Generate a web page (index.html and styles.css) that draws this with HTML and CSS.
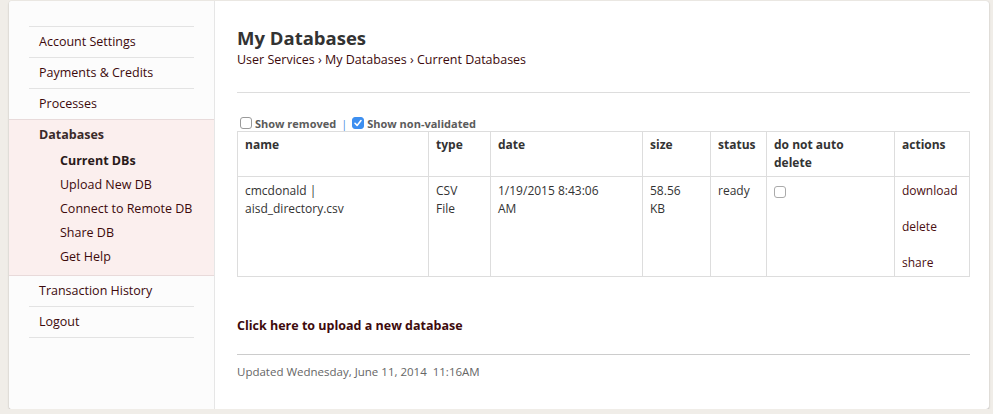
FILE: index.html
```html
<!DOCTYPE html>
<html>
<head>
<meta charset="utf-8">
<link rel="stylesheet" href="styles.css">
</head>
<body>
<div class="card">
  <aside class="side">
    <ul class="nav nav-top">
      <li><a href="#">Account Settings</a></li>
      <li><a href="#">Payments &amp; Credits</a></li>
      <li><a href="#">Processes</a></li>
    </ul>
    <div class="section">
      <div class="section-title">Databases</div>
      <ul class="sub">
        <li class="active"><a href="#">Current DBs</a></li>
        <li><a href="#">Upload New DB</a></li>
        <li><a href="#">Connect to Remote DB</a></li>
        <li><a href="#">Share DB</a></li>
        <li><a href="#">Get Help</a></li>
      </ul>
    </div>
    <ul class="nav nav-bottom">
      <li><a href="#">Transaction History</a></li>
      <li><a href="#">Logout</a></li>
    </ul>
  </aside>
  <main class="main">
    <h1 class="title">My Databases</h1>
    <div class="crumbs">User Services › My Databases › Current Databases</div>
    <hr class="rule">
    <div class="filters">
      <span class="cb"></span><span class="flabel">Show removed</span>
      <span class="sep">|</span>
      <span class="cb cb-on"><svg viewBox="0 0 12 12" width="12" height="12"><path d="M3 6.3 L5.1 8.4 L9 3.6" fill="none" stroke="#fff" stroke-width="1.6" stroke-linecap="round" stroke-linejoin="round"/></svg></span><span class="flabel">Show non-validated</span>
    </div>
    <table class="grid">
      <colgroup>
        <col class="c-name"><col class="c-type"><col class="c-date"><col class="c-size"><col class="c-status"><col class="c-dnad"><col class="c-actions">
      </colgroup>
      <thead>
        <tr>
          <th>name</th><th>type</th><th>date</th><th>size</th><th>status</th><th class="th-dnad">do not auto delete</th><th>actions</th>
        </tr>
      </thead>
      <tbody>
        <tr>
          <td>cmcdonald |<br>aisd_directory.csv</td>
          <td>CSV<br>File</td>
          <td>1/19/2015 8:43:06<br>AM</td>
          <td>58.56<br>KB</td>
          <td>ready</td>
          <td><span class="cb cb-cell"></span></td>
          <td class="acts"><a href="#">download</a><a href="#">delete</a><a href="#">share</a></td>
        </tr>
      </tbody>
    </table>
    <a class="upload" href="#">Click here to upload a new database</a>
    <hr class="rule2">
    <div class="updated">Updated Wednesday, June 11, 2014&nbsp;&nbsp;11:16AM</div>
  </main>
</div>
</body>
</html>
```
FILE: styles.css
```css
html, body {
  margin: 0;
  padding: 0;
  background: #f0ede8;
}
body {
  font-family: "Open Sans", "DejaVu Sans", sans-serif;
  font-size: 12.5px;
  color: #333;
}
a { color: #3d0a0c; text-decoration: none; }
ul { list-style: none; margin: 0; padding: 0; }

.card {
  display: flex;
  margin: 1px 0 0 9px;
  width: 980px;
  height: 408px;
  background: #fff;
  border-radius: 3px;
  box-shadow: 0 1px 2px rgba(0,0,0,0.22), 0 0 1px rgba(0,0,0,0.15);
  overflow: hidden;
}

.side {
  width: 205px;
  flex: none;
  background: #fcfcfc;
  border-right: 1px solid #e6e6e6;
  padding-top: 25px;
}
.nav { margin: 0 20px; }
.nav-top li { border-top: 1px solid #e3e3e3; }
.nav-bottom li { border-bottom: 1px solid #e3e3e3; }
.nav li a {
  display: block;
  height: 30px;
  line-height: 30px;
  padding-left: 10px;
}
.section {
  background: #fbefee;
  border-top: 1px solid #e8dada;
  border-bottom: 1px solid #e8dada;
  padding-bottom: 6px;
}
.section-title {
  line-height: 29px;
  padding-left: 30px;
  font-weight: bold;
  color: #3a2a2a;
}
.sub li a {
  display: block;
  line-height: 24px;
  padding-left: 51px;
}
.sub li.active a { font-weight: bold; color: #2a1a1a; }

.main {
  flex: 1;
  padding: 25px 20px 0 22px;
}
.title {
  margin: 0;
  font-size: 18.5px;
  line-height: 24px;
  font-weight: bold;
  color: #333;
}
.crumbs {
  margin-top: 1px;
  line-height: 18px;
  color: #3d0a0c;
}
.rule {
  margin: 23px 0 0;
  border: 0;
  border-top: 1px solid #ddd;
  height: 0;
}
.filters {
  margin-top: 22px;
  height: 16px;
  display: flex;
  align-items: center;
  font-size: 11px;
  font-weight: bold;
  color: #5b5b5b;
  padding-left: 3px;
}
.cb {
  display: inline-block;
  box-sizing: border-box;
  width: 12px;
  height: 12px;
  border: 1px solid #9a9a9a;
  border-radius: 3px;
  background: #fff;
  margin-right: 3px;
}
.cb-on {
  background: #3d8ff0;
  border-color: #3d8ff0;
  position: relative;
}
.cb-on svg { position: absolute; left: -1px; top: -1px; }
.sep { color: #4a90e2; font-weight: normal; margin: 0 5px 0 5px; }

.grid {
  width: 732px;
  border-collapse: collapse;
  table-layout: fixed;
  font-size: 12px;
}
.c-name { width: 191px; }
.c-type { width: 62px; }
.c-date { width: 152px; }
.c-size { width: 68px; }
.c-status { width: 56px; }
.c-dnad { width: 128px; }
.c-actions { width: 75px; }
.grid th, .grid td {
  border: 1px solid #ddd;
  text-align: left;
  vertical-align: top;
  line-height: 18px;
  padding: 4px 7px 4px 7px;
}
.grid th { font-weight: bold; color: #333; }
.grid th.th-dnad { padding-right: 30px; }
.grid td { padding-top: 5px; color: #333; }
.cb-cell { margin-top: 4px; border-color: #aaa; }
.acts a { display: block; margin-bottom: 18px; color: #4a0f12; }
.acts a:last-child { margin-bottom: 0; }

.upload {
  display: block;
  margin-top: 40px;
  font-weight: bold;
  font-size: 12.5px;
  line-height: 18px;
}
.rule2 {
  margin: 19px 0 0;
  border: 0;
  border-top: 1px solid #ccc;
  height: 0;
}
.updated {
  margin-top: 9px;
  font-size: 11.5px;
  line-height: 16px;
  color: #666;
}
```
